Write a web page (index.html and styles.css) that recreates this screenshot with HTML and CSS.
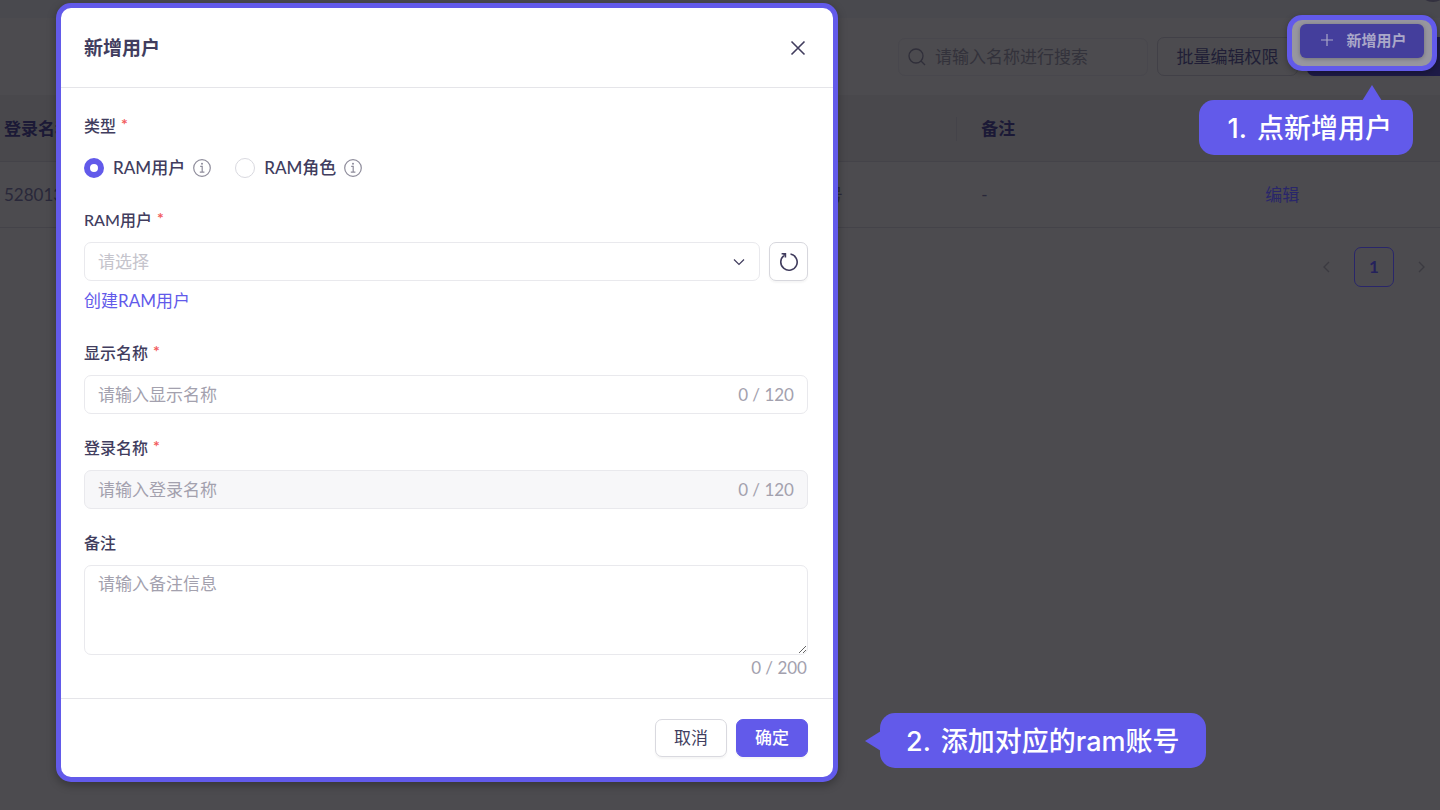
FILE: index.html
```html
<!DOCTYPE html>
<html lang="zh-CN">
<head>
<meta charset="utf-8">
<meta name="viewport" content="width=device-width, initial-scale=1">
<title>新增用户</title>
<link rel="stylesheet" href="styles.css">
</head>
<body>
<div class="page">
  <header class="topbar"><span class="avatar"></span></header>
  <main>
    <div class="toolbar">
      <label class="search">
        <svg class="search-icon" viewBox="0 0 18 18" aria-hidden="true"><circle cx="8" cy="8" r="7"/><path d="M13 13l4 4"/></svg>
        <input type="text" placeholder="请输入名称进行搜索" aria-label="搜索">
      </label>
      <button class="batch" type="button">批量编辑权限</button>
      <span class="add-shade"></span>
    </div>
    <table class="users">
      <colgroup><col class="col-login"><col class="col-account"><col class="col-note"><col class="col-action"></colgroup>
      <thead><tr><th>登录名称</th><th><span class="divider"></span></th><th>备注</th><th></th></tr></thead>
      <tbody><tr><td>528013</td><td>号</td><td>-</td><td><a href="#edit">编辑</a></td></tr></tbody>
    </table>
    <nav class="pager" aria-label="分页">
      <button type="button" class="step" aria-label="上一页"><svg viewBox="0 0 8 12"><path d="M7 1L2 6l5 5"/></svg></button>
      <button type="button" class="current">1</button>
      <button type="button" class="step" aria-label="下一页"><svg viewBox="0 0 8 12"><path d="M1 1l5 5-5 5"/></svg></button>
    </nav>
  </main>

  <form class="dialog" role="dialog" aria-labelledby="dialog-title">
    <div class="dialog-head">
      <h1 id="dialog-title">新增用户</h1>
      <button class="close" type="button" aria-label="关闭"><svg viewBox="0 0 16 16"><path d="M1.500 1.500l13 13M14.500 1.500l-13 13"/></svg></button>
    </div>
    <div class="dialog-body">
      <fieldset class="type">
        <legend class="label">类型<span class="star">*</span></legend>
        <div class="radios">
          <div class="radio">
            <input type="radio" name="type" id="t-user" checked><label for="t-user">RAM用户</label>
            <svg class="info" viewBox="0 0 18 18" aria-hidden="true"><circle cx="9" cy="9" r="8.300"/><path d="M7.200 7.300h2v5.700M6.800 13.100h4.600"/><circle class="dot" cx="9" cy="4.700" r="1"/></svg>
          </div>
          <div class="radio">
            <input type="radio" name="type" id="t-role"><label for="t-role">RAM角色</label>
            <svg class="info" viewBox="0 0 18 18" aria-hidden="true"><circle cx="9" cy="9" r="8.300"/><path d="M7.200 7.300h2v5.700M6.800 13.100h4.600"/><circle class="dot" cx="9" cy="4.700" r="1"/></svg>
          </div>
        </div>
      </fieldset>
      <div class="field user-field">
        <label class="label" for="ram">RAM用户<span class="star">*</span></label>
        <div class="select-row">
          <div class="select-wrap">
            <select id="ram" class="control"><option>请选择</option></select>
            <svg class="chevron" viewBox="0 0 12 8" aria-hidden="true"><path d="M1 1.500l5 5 5-5"/></svg>
          </div>
          <button class="refresh" type="button" aria-label="刷新"><svg viewBox="0 0 20 20"><path d="M11.500 2a8.200 8.200 0 1 1-6.600 1.600"/><path d="M2.600 1.700H6.400V5.500"/><path class="tip" d="M3.400 1.500h3.600v3.800z"/></svg></button>
        </div>
        <a class="create" href="#create">创建RAM用户</a>
      </div>
      <div class="field">
        <label class="label" for="display">显示名称<span class="star">*</span></label>
        <div class="control counted"><input id="display" type="text" placeholder="请输入显示名称"><span>0 / 120</span></div>
      </div>
      <div class="field">
        <label class="label" for="login">登录名称<span class="star">*</span></label>
        <div class="control counted disabled"><input id="login" type="text" placeholder="请输入登录名称" disabled><span>0 / 120</span></div>
      </div>
      <div class="field">
        <label class="label" for="note">备注</label>
        <textarea id="note" class="control" placeholder="请输入备注信息"></textarea>
        <div class="note-count">0 / 200</div>
      </div>
    </div>
    <div class="dialog-foot">
      <button class="btn" type="button">取消</button>
      <button class="btn primary" type="submit">确定</button>
    </div>
  </form>

  <div class="spotlight"><button class="add" type="button"><svg viewBox="0 0 14 14" aria-hidden="true"><path d="M7 1v12M1 7h12"/></svg>新增用户</button></div>
  <div class="callout first"><span>1.</span><span>点新增用户</span></div>
  <div class="callout second"><span>2.</span><span>添加对应的ram账号</span></div>
</div>
</body>
</html>
```
FILE: styles.css
```css
* { box-sizing: border-box; }
body {
  margin: 0;
  background: #4c4b4f;
  color: #24223c;
  font: 17px/24px Lato, "Noto Sans CJK SC", sans-serif;
}
button, input, select, textarea { font: inherit; color: inherit; margin: 0; }
button { cursor: pointer; padding: 0; }
a { text-decoration: none; }
svg { fill: none; stroke: currentColor; display: block; flex: none; }
.page { position: relative; min-height: 100vh; overflow: hidden; }

/* Dimmed page */
.topbar { height: 18px; background: #49494e; position: relative; overflow: hidden; }
.avatar { position: absolute; right: -8px; top: -28px; width: 30px; height: 30px; border-radius: 50%; background: #33313f; }
.toolbar { display: flex; align-items: center; justify-content: flex-end; height: 77px; gap: 9px; }
.search {
  display: flex; align-items: center; gap: 9px;
  width: 250px; height: 38px; padding-left: 9px;
  border: 1px solid #48474d; border-radius: 7px; color: #302f3a;
}
.search-icon { width: 18px; height: 18px; stroke-width: 1.300; }
.search input { flex: 1; min-width: 0; border: 0; padding: 0; background: none; outline: 0; }
.search input::placeholder { color: #33323b; opacity: 1; }
.batch { width: 141px; height: 39px; background: none; border: 1px solid #414047; border-radius: 7px; color: #201e36; }
.add-shade { width: 133px; height: 39px; border-radius: 7px 0 0 7px; background: #1d1a47; }
.users { width: 100%; border-collapse: collapse; table-layout: fixed; }
.col-login { width: 57%; }
.col-account { width: 11%; }
.col-note { width: 20%; }
.users th, .users td { height: 66px; padding: 2px 4px 0; text-align: left; border-bottom: 1px solid #444349; }
.users th { background: #49484c; color: #1b1936; font-weight: 700; }
.users td { color: #29283a; }
.users td:nth-child(2) { padding-left: 5px; }
.users th:nth-child(3), .users td:nth-child(3) { padding-left: 2px; }
.users td:nth-child(4) { padding-left: 0; }
.users a { color: #29266a; margin-left: -2px; }
.divider { display: block; width: 1px; height: 24px; margin-left: auto; margin-right: 18px; background: #444349; }
.pager { display: flex; justify-content: flex-end; align-items: center; gap: 24px; padding: 19px 14px 0 0; }
.step { background: none; border: 0; color: #3b3a41; }
.step svg { width: 8px; height: 12px; stroke-width: 1.300; }
.current { width: 40px; height: 40px; background: none; border: 1px solid #29266a; border-radius: 7px; color: #24215c; font-weight: 700; }

/* Dialog */
.dialog {
  position: absolute; left: 56px; top: 3px; width: 782px; max-width: calc(100% - 64px);
  background: #fff; border: 5px solid #625aea; border-radius: 15px;
  color: #413d5e; box-shadow: 0 3px 10px rgba(0, 0, 0, .3);
}
.dialog-head { display: flex; align-items: center; justify-content: space-between; height: 80px; padding: 1px 27px 0 23px; border-bottom: 1px solid #e5e5e9; }
h1 { margin: 0; font-size: 19px; line-height: 28px; font-weight: 700; }
.close { border: 0; background: none; }
.close svg { width: 16px; height: 16px; stroke-width: 1.600; }
.dialog-body { padding: 26px 25px 18px 23px; }
.type { margin: 0 0 28px; padding: 0; border: 0; min-width: 0; }
.label { display: flex; align-items: flex-start; width: max-content; padding: 0; font-size: 16px; line-height: 24px; font-weight: 500; }
.star { margin-left: 5px; color: #f25c5c; font-size: 16px; line-height: 20px; font-weight: 700; }
.radios { display: flex; gap: 24px; padding-top: 18px; }
.radio { display: flex; align-items: center; }
.radio label { margin: 0 8px 0 9px; font-weight: 500; }
.radio input { appearance: none; width: 20px; height: 20px; border: 1px solid #d9d9df; border-radius: 50%; background: #fff; }
.radio input:checked { border: 6px solid #625aea; }
.info { width: 18px; height: 18px; color: #8e8c9b; stroke-width: 1.200; }
.info .dot { fill: currentColor; stroke: none; }
.field { margin-top: 22px; }
.user-field { margin: 0 0 28px; }
.control {
  display: block; width: 100%; height: 39px; margin-top: 10px; padding: 0 13px;
  border: 1px solid #e9e9ed; border-radius: 7px; background: #fff;
}
.select-row { display: flex; gap: 9px; margin-top: 10px; }
.select-wrap { flex: 1; position: relative; }
select.control { margin: 0; appearance: none; color: #c5c4cc; }
.chevron { position: absolute; right: 15px; top: 16px; width: 12px; height: 8px; stroke-width: 1.200; pointer-events: none; }
.refresh { display: flex; align-items: center; justify-content: center; width: 39px; height: 39px; border: 1px solid #d7d7dd; border-radius: 7px; background: #fff; box-shadow: 0 2px 2px rgba(0, 0, 0, .04); }
.refresh svg { width: 20px; height: 20px; stroke-width: 1.600; }
.refresh .tip { fill: currentColor; stroke: none; }
.create { display: block; width: max-content; margin-top: 8px; color: #625aea; }
.counted { display: flex; align-items: center; }
.counted input { flex: 1; min-width: 0; padding: 0; border: 0; outline: 0; background: none; }
.counted span, .note-count { color: #a3a1ae; }
.dialog ::placeholder { color: #a3a1ae; opacity: 1; }
.disabled { background: #f7f7f9; }
textarea.control { height: 90px; padding: 6px 13px; resize: vertical; outline: 0; }
.note-count { text-align: right; padding: 1px 1px 0 0; }
.dialog-foot { display: flex; justify-content: flex-end; gap: 9px; padding: 20px 25px 20px 23px; border-top: 1px solid #e5e5e9; }
.btn { width: 72px; height: 38px; border: 1px solid #d9d9df; border-radius: 7px; background: #fff; box-shadow: 0 2px 2px rgba(0, 0, 0, .04); }
.primary { background: #625aea; border-color: #625aea; color: #fff; font-weight: 500; }

/* Guide annotations */
.spotlight {
  position: absolute; right: 3px; top: 15px; width: 150px; padding: 4px 8px 8px;
  border: 5px solid #625aea; border-radius: 15px; background: #97969f;
  box-shadow: 0 2px 6px rgba(0, 0, 0, .3);
}
.add { display: flex; align-items: center; justify-content: center; gap: 12px; width: 100%; height: 34px; padding: 0 0 2px 3px; border: 0; border-radius: 6px; background: #443e9c; color: #aaa8c8; font-size: 15px; font-weight: 700; box-shadow: 0 1px 4px rgba(0, 0, 0, .25); }
.add svg { width: 14px; height: 14px; stroke-width: 1.200; }
.callout {
  position: absolute; display: flex; gap: 10px; padding: 9px 21px 6px 29px;
  border-radius: 15px; background: #625aea; color: #fff;
  font: 500 27px/40px Inter, "Noto Sans CJK SC", sans-serif; white-space: nowrap;
}
.callout::before { content: ""; position: absolute; background: #625aea; }
.first { right: 27px; top: 100px; }
.first::before { right: 31px; top: -15px; width: 20px; height: 16px; clip-path: polygon(50% 0, 100% 100%, 0 100%); }
.second { left: 880px; top: 713px; padding-left: 26px; padding-right: 27px; }
.second::before { left: -15px; top: 18px; width: 16px; height: 20px; clip-path: polygon(0 50%, 100% 0, 100% 100%); }
```
